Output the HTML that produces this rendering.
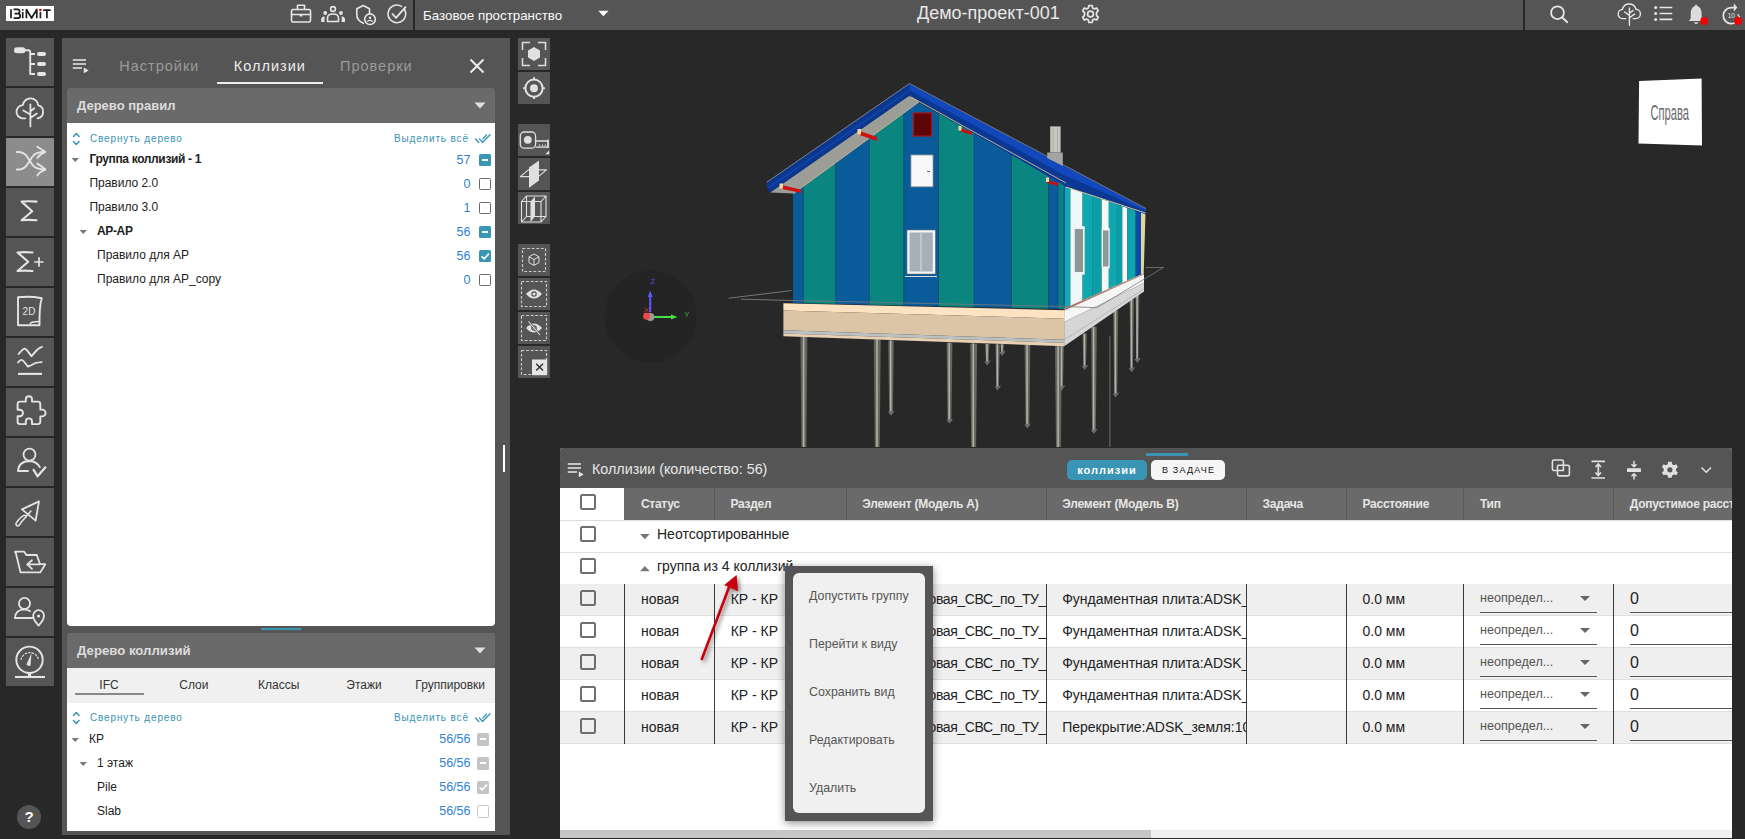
<!DOCTYPE html>
<html><head><meta charset="utf-8">
<style>
*{box-sizing:border-box;margin:0;padding:0}
html,body{width:1745px;height:839px;overflow:hidden;background:#282828;font-family:"Liberation Sans",sans-serif;}
.a{position:absolute}
#top{left:0;top:0;width:1745px;height:30px;background:#555}
.lb{position:absolute;left:6px;width:48px;height:48px;background:#555}
.lb svg{position:absolute;left:0;top:0}
#panel{left:62px;top:38px;width:448px;height:797px;background:#555}
.tab{position:absolute;top:57px;font-size:15px;letter-spacing:1px;color:#9a9a9a}
.sech{position:absolute;left:67px;width:428px;height:35px;background:#6a6a6a;border-radius:3px 3px 0 0;color:#ddd;font-weight:bold;font-size:14px}
.white{position:absolute;background:#fff}
.rt{position:absolute;left:518px;width:32px;height:32px;background:#555}
.tr{position:absolute;font-size:12px;color:#222;white-space:nowrap;margin-top:1px}
.num{position:absolute;font-size:12.5px;color:#2f7fd6;text-align:right;white-space:nowrap;margin-top:1.5px}
.cb{position:absolute;width:13px;height:13px;border:1.5px solid #555;border-radius:2px;background:#fff}
.cbf{position:absolute;width:13px;height:13px;border-radius:2px;background:#3d95b5}
.link{position:absolute;font-size:10px;letter-spacing:0.85px;color:#3a92b2;white-space:nowrap;margin-top:0.8px}
</style></head><body>
<div id="top" class="a"></div>
<svg class="a" style="left:0;top:0" width="1745" height="30" fill="none" stroke="#e6e6e6" stroke-width="1.6" stroke-linecap="round" stroke-linejoin="round">
 <rect x="6" y="6" width="48" height="15" fill="#fff" stroke="none"/>
 <g stroke="#1e1e1e" stroke-width="1.7" stroke-linecap="butt">
  <path d="M11 9.2V18.3"/>
  <path d="M13.6 9.3H17.6Q19.6 9.3 19.6 11.5Q19.6 13.6 17.4 13.6H14.5M17.4 13.6Q20.2 13.6 20.2 15.9Q20.2 18.2 17.6 18.2H13.6"/>
  <path d="M22.7 12V18.3"/><rect x="21.9" y="9.1" width="1.6" height="1.6" fill="#1e1e1e" stroke="none"/>
  <path d="M26.4 18.3V9.5L31.6 18L36.8 9.5V18.3"/>
  <path d="M40.4 12V18.3"/><rect x="39.2" y="8.9" width="2.4" height="2.2" fill="#e00000" stroke="none"/>
  <path d="M43.2 10.2H50.6M46.9 10.2V18.3"/>
 </g>
 <!-- briefcase -->
 <rect x="291.5" y="9.5" width="19" height="12.5" rx="1.5"/>
 <path d="M297.5 9.5V5.3H304.5V9.5M291.5 14.5H310.5"/>
 <rect x="299.6" y="14" width="2.8" height="2.5" fill="#e6e6e6" stroke="none"/>
 <!-- people -->
 <circle cx="333" cy="9" r="2.4"/>
 <path d="M327.5 21.5V18Q327.5 14 333 14Q338.5 14 338.5 18V21.5Z"/>
 <circle cx="325.2" cy="13" r="1.9" fill="#e6e6e6" stroke="none"/>
 <circle cx="341" cy="13" r="1.9" fill="#e6e6e6" stroke="none"/>
 <path d="M321.2 22V19.5Q321.2 16.8 324.5 16.3V22Z M345 22V19.5Q345 16.8 341.7 16.3V22Z" fill="#e6e6e6" stroke="none"/>
 <!-- shield -->
 <path d="M369.5 13.6V8.7L363.3 5.5L356.8 8.7V14.5Q356.8 20.5 363.3 23.2"/>
 <circle cx="370" cy="19.2" r="5.3"/>
 <circle cx="370" cy="17.8" r="1.2" fill="#e6e6e6" stroke="none"/>
 <path d="M367.6 21.2Q370 19.6 372.4 21.2" stroke-width="1.3"/>
 <!-- check circle -->
 <path d="M404.5 9.5A8.8 8.8 0 1 1 401.5 6.4"/>
 <path d="M392.5 14L396 17.8L405.5 7.2" stroke-width="1.8"/>
 <line x1="414" y1="0" x2="414" y2="30" stroke="#282828" stroke-width="2"/>
 <path d="M598.3 10.8H608.6L603.4 16.2Z" fill="#fff" stroke="none"/>
 <!-- gear -->
 <g transform="translate(1090.5 14)">
  <path d="M-1.6 -8.5H1.6L2.1 -6.1L3.9 -5.1L6.2 -6L7.8 -3.2L6 -1.6V1.6L7.8 3.2L6.2 6L3.9 5.1L2.1 6.1L1.6 8.5H-1.6L-2.1 6.1L-3.9 5.1L-6.2 6L-7.8 3.2L-6 1.6V-1.6L-7.8 -3.2L-6.2 -6L-3.9 -5.1L-2.1 -6.1Z" stroke-width="1.7"/>
  <circle r="2.9" stroke-width="1.7"/>
 </g>
 <line x1="1524" y1="0" x2="1524" y2="30" stroke="#282828" stroke-width="2"/>
 <!-- search -->
 <circle cx="1557.5" cy="12.7" r="6.4" stroke-width="1.8"/>
 <path d="M1562.3 17.5L1567.3 22.2" stroke-width="1.9"/>
 <!-- cloud tree -->
 <g transform="translate(1609.5 -4.2) scale(0.83)" stroke-width="1.7">
  <path d="M19.5 27.5H16.5A5.6 5.6 0 0 1 15.6 16.3A8.3 8.3 0 0 1 31.8 16.3A5.6 5.6 0 0 1 31.5 27.5H28.5"/>
  <path d="M24 14.5V35.5M18.2 19.5L24 23.5M28.3 17.8L24 20.8M30.2 22L24 26.5"/>
 </g>
 <!-- list -->
 <g fill="#e6e6e6" stroke="none">
  <circle cx="1655.6" cy="7.5" r="1.5"/><circle cx="1655.6" cy="13.5" r="1.5"/><circle cx="1655.6" cy="19.4" r="1.5"/>
 </g>
 <path d="M1659.5 7.5H1672.3M1659.5 13.5H1672.3M1659.5 19.4H1672.3" stroke-width="1.7" stroke-linecap="butt"/>
 <!-- bell -->
 <path d="M1696 4.5Q1697.3 4.5 1697.3 6Q1701.6 7.5 1701.6 13.5V18.5L1703.5 21H1688.8L1690.7 18.5V13.5Q1690.7 7.5 1695 6Q1695 4.5 1696 4.5Z" fill="#dcdcdc" stroke="none"/>
 <path d="M1694 22.2H1698.3Q1698 24 1696.2 24Q1694.3 24 1694 22.2Z" fill="#dcdcdc" stroke="none"/>
 <circle cx="1704.2" cy="20.9" r="3.9" fill="#f00000" stroke="none"/>
 <!-- refresh 10 -->
 <path d="M1739.2 16.8A8 8 0 1 1 1731.2 7.6H1734.5" stroke-width="1.8"/>
 <path d="M1733.8 3.3L1737.3 7.6L1733.8 11.8Z" fill="#e6e6e6" stroke="none"/>
 <text x="1731.3" y="18.3" font-family="Liberation Sans" font-size="6.5" fill="#e6e6e6" stroke="none" text-anchor="middle">10</text>
 <rect x="1737.5" y="14.2" width="1.6" height="1.6" fill="#e6e6e6" stroke="none"/>
 <circle cx="1738" cy="20.9" r="3.9" fill="#f00000" stroke="none"/>
</svg>
<div class="a" style="left:423px;top:8.2px;font-size:13.35px;color:#fafafa;white-space:nowrap">Базовое пространство</div>
<div class="a" style="left:917px;top:3px;font-size:18px;color:#e8e8e8;white-space:nowrap">Демо-проект-001</div>
<!-- left toolbar -->
<div class="lb" style="top:38px;background:#555"><svg width="48" height="48" fill="none" stroke="#e4e4e4" stroke-linecap="round" stroke-linejoin="round"><rect x="8" y="9.2" width="11.5" height="6" rx="3" fill="#e4e4e4" stroke="none"/>
<path d="M19 12.2H22.5Q24.2 12.2 24.2 14V36H29M24.2 16H29M24.2 26H29" stroke-width="1.9" stroke-linecap="butt"/>
<rect x="31" y="14" width="9" height="4" rx="2" fill="#e4e4e4" stroke="none"/>
<rect x="31" y="24" width="9" height="4" rx="2" fill="#e4e4e4" stroke="none"/>
<rect x="31" y="34" width="9" height="4" rx="2" fill="#e4e4e4" stroke="none"/></svg></div>
<div class="lb" style="top:88px;background:#555"><svg width="48" height="48" fill="none" stroke="#e4e4e4" stroke-linecap="round" stroke-linejoin="round"><path d="M19.3 30.3H16A6.6 6.6 0 0 1 16.8 17.2A7.8 7.8 0 0 1 32.3 17.4A6.6 6.6 0 0 1 31.5 30.3" stroke-width="1.8"/>
<path d="M24.4 16.5V38.5M17.3 22.5L24.4 26.5M28.3 20.3L24.4 23.3M30.8 25.6L24.4 30" stroke-width="1.8"/></svg></div>
<div class="lb" style="top:138px;background:#8c8c8c"><svg width="48" height="48" fill="none" stroke="#e4e4e4" stroke-linecap="round" stroke-linejoin="round"><path d="M10.8 14Q17.5 13.5 21 18.5L26.5 27Q30 31.5 39 31.5M10.8 31.5Q17.5 32 21 27L26.5 18.5Q30 13.8 39 14" stroke-width="1.9"/>
<path d="M31.3 8.7Q36 11.5 39.3 14Q35 15.3 31.3 20M31.3 25.6Q36 28.4 39.3 31.5Q35 32.8 31.3 37.5" stroke-width="1.9"/></svg></div>
<div class="lb" style="top:188px;background:#555"><svg width="48" height="48" fill="none" stroke="#e4e4e4" stroke-linecap="round" stroke-linejoin="round"><path d="M30.5 13.6Q22.5 12.8 15.6 13.6L26.2 23.2L15.6 32.3Q22.5 31.5 30.5 32.3" stroke-width="2.1"/></svg></div>
<div class="lb" style="top:238px;background:#555"><svg width="48" height="48" fill="none" stroke="#e4e4e4" stroke-linecap="round" stroke-linejoin="round"><path d="M26.5 14.5Q19 13.7 11.5 14.5L22.2 23.8L11.5 33Q19 32.2 26.5 33" stroke-width="2.1"/>
<path d="M28.3 24H37.6M33 19.3V28.7" stroke-width="1.7" stroke-linecap="butt"/></svg></div>
<div class="lb" style="top:288px;background:#555"><svg width="48" height="48" fill="none" stroke="#e4e4e4" stroke-linecap="round" stroke-linejoin="round"><path d="M12 9.3Q24 7.8 35.8 10.2Q33.2 18 33.5 37.2H12Z" stroke-width="1.9"/>
<path d="M24.3 35.5Q25.5 33.5 33 33.5" stroke-width="1.5"/>
<text x="23" y="27" font-family="Liberation Sans" font-size="10" fill="#e4e4e4" stroke="none" text-anchor="middle">2D</text></svg></div>
<div class="lb" style="top:338px;background:#555"><svg width="48" height="48" fill="none" stroke="#e4e4e4" stroke-linecap="round" stroke-linejoin="round"><path d="M12.6 16Q16.5 11 18.7 10.6Q19.5 10.5 21 12.3L25.5 18.2L30.5 12.5Q33 10 36 8.9" stroke-width="1.9"/>
<path d="M12.1 24.5Q14 21.8 15.7 21.9Q17 22 21.7 28.5Q25 27.5 29 25.2Q32 24.3 35.6 24.1" stroke-width="1.9"/>
<path d="M12 35.9H36" stroke-width="2.1" stroke-linecap="butt"/></svg></div>
<div class="lb" style="top:388px;background:#555"><svg width="48" height="48" fill="none" stroke="#e4e4e4" stroke-linecap="round" stroke-linejoin="round"><path d="M14 13.6H19.8V11.4A2 2 0 0 1 26 11.4V13.6H31.8Q34.3 13.6 34.3 16V21.6H36.2A2 2 0 0 1 36.2 28.4H34.3V33.8Q34.3 36.1 31.8 36.1H26V33.5A2 2 0 0 0 19.8 33.5V36.1H14Q11.6 36.1 11.6 33.8V28.2H13.8A2 2 0 0 0 13.8 21.8H11.6V16Q11.6 13.6 14 13.6Z" stroke-width="1.9"/></svg></div>
<div class="lb" style="top:438px;background:#555"><svg width="48" height="48" fill="none" stroke="#e4e4e4" stroke-linecap="round" stroke-linejoin="round"><circle cx="23.5" cy="16.6" r="6" stroke-width="1.8"/>
<path d="M34.3 29.9Q31 23.2 23.5 23Q12.5 23.4 12 33H22.7" stroke-width="1.8" stroke-linecap="butt"/>
<path d="M27.6 31.8L31.6 38.3L39.4 29.3" stroke-width="2.2"/></svg></div>
<div class="lb" style="top:488px;background:#555"><svg width="48" height="48" fill="none" stroke="#e4e4e4" stroke-linecap="round" stroke-linejoin="round"><path d="M16 21.4L33 13.4L29.6 32.6Z" stroke-width="1.8"/>
<path d="M24.9 23L21.8 26.7Q20 28.5 19 27.3Q16 27.3 10.5 34.5Q9 37.5 11.5 38Q13.5 38 15.5 33.7L20.6 28.3" stroke-width="1.6"/></svg></div>
<div class="lb" style="top:538px;background:#555"><svg width="48" height="48" fill="none" stroke="#e4e4e4" stroke-linecap="round" stroke-linejoin="round"><path d="M9.7 14.5Q8.5 14 9.3 13.6H18.2L20.3 17H30.8L34 26.2H39.3L34.3 34.4H14.5Z" stroke-width="1.8"/>
<path d="M33.5 26.4H21.2M26 22.3L21.2 26.4L26 30.8" stroke-width="1.8"/></svg></div>
<div class="lb" style="top:588px;background:#555"><svg width="48" height="48" fill="none" stroke="#e4e4e4" stroke-linecap="round" stroke-linejoin="round"><circle cx="18.5" cy="15.5" r="5.6" stroke-width="1.8"/>
<path d="M24.7 23.6Q22 21.3 18.5 21.3Q9.5 21.5 8.9 30H27" stroke-width="1.8" stroke-linecap="butt"/>
<path d="M32.6 37.6Q27.2 32 27.2 27.6A5.4 5.4 0 0 1 38 27.6Q38 32 32.6 37.6Z" stroke-width="1.8"/>
<circle cx="32.6" cy="28" r="1.6" fill="#e4e4e4" stroke="none"/></svg></div>
<div class="lb" style="top:638px;background:#555"><svg width="48" height="48" fill="none" stroke="#e4e4e4" stroke-linecap="round" stroke-linejoin="round"><circle cx="23.5" cy="21.8" r="13.2" stroke-width="1.9"/>
<path d="M21.9 35H25.1V38.5H21.9Z" fill="#e4e4e4" stroke="none"/>
<path d="M9 39H39" stroke-width="2.1" stroke-linecap="butt"/>
<path d="M25.5 15.2L20.4 26.5Q22.7 28.8 24.5 27.5Z" fill="#e4e4e4" stroke="none"/>
<path d="M15 21.5A9 9 0 0 1 32.5 21.5" stroke-width="1.1" stroke-dasharray="1.6 1.9"/></svg></div>
<div class="a" style="left:17px;top:805px;width:24px;height:24px;border-radius:50%;background:#555;color:#fff;font-weight:bold;font-size:15px;text-align:center;line-height:24px">?</div>

<div id="panel" class="a"></div>
<svg class="a" style="left:72px;top:58px" width="18" height="16"><path d="M0.8 2H14M0.8 6H14M0.8 10H10" stroke="#e8e8e8" stroke-width="1.6"/><path d="M11.8 9.5L16.6 12.4L11.8 15.3Z" fill="#e8e8e8"/></svg>
<div class="tab" style="left:119.3px;top:58px;font-size:14.5px">Настройки</div>
<div class="tab" style="left:233.8px;top:58px;font-size:14.5px;color:#ececec">Коллизии</div>
<div class="tab" style="left:340px;top:58px;font-size:14.5px">Проверки</div>
<div class="a" style="left:217px;top:82px;width:106px;height:2.2px;background:#ececec"></div>
<svg class="a" style="left:469px;top:58px" width="16" height="16"><path d="M1.5 1.5L14.5 14.5M14.5 1.5L1.5 14.5" stroke="#ececec" stroke-width="2"/></svg>
<div class="a" style="left:503.2px;top:444.5px;width:1.6px;height:27.5px;background:#fff"></div>
<div class="sech" style="top:88px"><span class="a" style="left:10px;top:9.5px;font-size:13px">Дерево правил</span><svg class="a" style="left:407px;top:14px" width="12" height="7"><path d="M0.5 0.5H11.5L6 6.5Z" fill="#e0e0e0"/></svg></div>
<div class="white" style="left:67px;top:123px;width:428px;height:503px;border-radius:0 0 4px 4px"></div>
<svg class="a" style="left:72px;top:131.5px" width="9" height="14" fill="none" stroke="#3a95b5" stroke-width="1.5" stroke-linecap="round" stroke-linejoin="round"><path d="M1.5 4.5L4.3 1.5L7.1 4.5M1.5 9.5L4.3 12.5L7.1 9.5"/></svg>
<div class="link" style="left:90px;top:132.5px">Свернуть дерево</div>
<div class="link" style="left:394px;top:132.5px">Выделить всё</div>
<svg class="a" style="left:474px;top:132.5px" width="18" height="11" fill="none" stroke="#3a95b5" stroke-width="1.4" stroke-linecap="round" stroke-linejoin="round"><path d="M1.5 6L4.8 9.4M5.5 6L8.5 9.4L16 1.8M8.9 5.9L12.4 2"/></svg>
<svg class="a" style="left:71px;top:157.0px" width="9" height="6"><path d="M0.5 1H8L4.25 5Z" fill="#777"/></svg>
<div class="tr" style="left:89.4px;top:151px;font-weight:bold;letter-spacing:-0.35px;">Группа коллизий - 1</div>
<div class="num" style="right:1274.5px;top:151px">57</div>
<div class="a" style="left:478.5px;top:153.5px;width:12.5px;height:12.5px;border-radius:1.5px;background:#3a95b5"><div class="a" style="left:3px;top:5.3px;width:6.5px;height:1.9px;background:#fff"></div></div>
<div class="tr" style="left:89.4px;top:175px;">Правило 2.0</div>
<div class="num" style="right:1274.5px;top:175px">0</div>
<div class="a" style="left:478.5px;top:177.5px;width:12.5px;height:12.5px;border:1.6px solid #6a6a6a;border-radius:1.5px;background:#fff"></div>
<div class="tr" style="left:89.4px;top:199px;">Правило 3.0</div>
<div class="num" style="right:1274.5px;top:199px">1</div>
<div class="a" style="left:478.5px;top:201.5px;width:12.5px;height:12.5px;border:1.6px solid #6a6a6a;border-radius:1.5px;background:#fff"></div>
<svg class="a" style="left:79px;top:229.0px" width="9" height="6"><path d="M0.5 1H8L4.25 5Z" fill="#777"/></svg>
<div class="tr" style="left:97px;top:223px;font-weight:bold;letter-spacing:-0.35px;">АР-АР</div>
<div class="num" style="right:1274.5px;top:223px">56</div>
<div class="a" style="left:478.5px;top:225.5px;width:12.5px;height:12.5px;border-radius:1.5px;background:#3a95b5"><div class="a" style="left:3px;top:5.3px;width:6.5px;height:1.9px;background:#fff"></div></div>
<div class="tr" style="left:97px;top:247px;">Правило для АР</div>
<div class="num" style="right:1274.5px;top:247px">56</div>
<div class="a" style="left:478.5px;top:249.5px;width:12.5px;height:12.5px;border-radius:1.5px;background:#3a95b5"><svg class="a" style="left:0;top:0" width="12.5" height="12.5"><path d="M2.6 6.4L5.1 8.9L10 3.6" fill="none" stroke="#fff" stroke-width="1.6"/></svg></div>
<div class="tr" style="left:97px;top:271px;">Правило для АР_copy</div>
<div class="num" style="right:1274.5px;top:271px">0</div>
<div class="a" style="left:478.5px;top:273.5px;width:12.5px;height:12.5px;border:1.6px solid #6a6a6a;border-radius:1.5px;background:#fff"></div>
<div class="a" style="left:261px;top:627.5px;width:40px;height:2px;background:#3a95b5"></div>
<div class="sech" style="top:633px"><span class="a" style="left:10px;top:9.5px;font-size:13.2px">Дерево коллизий</span><svg class="a" style="left:407px;top:14px" width="12" height="7"><path d="M0.5 0.5H11.5L6 6.5Z" fill="#e0e0e0"/></svg></div>
<div class="white" style="left:67px;top:668px;width:428px;height:163px"></div>
<div class="a" style="left:67px;top:668px;width:428px;height:34.5px;background:#f0f0f0"></div>
<div class="a" style="left:59px;width:100px;text-align:center;top:678px;font-size:12px;color:#333;white-space:nowrap">IFC</div>
<div class="a" style="left:143.9px;width:100px;text-align:center;top:678px;font-size:12px;color:#333;white-space:nowrap">Слои</div>
<div class="a" style="left:228.7px;width:100px;text-align:center;top:678px;font-size:12px;color:#333;white-space:nowrap">Классы</div>
<div class="a" style="left:314px;width:100px;text-align:center;top:678px;font-size:12px;color:#333;white-space:nowrap">Этажи</div>
<div class="a" style="left:400.2px;width:100px;text-align:center;top:678px;font-size:12px;color:#333;white-space:nowrap">Группировки</div>
<div class="a" style="left:75px;top:692.5px;width:69px;height:2px;background:#888"></div>
<svg class="a" style="left:72px;top:710.6px" width="9" height="14" fill="none" stroke="#3a95b5" stroke-width="1.5" stroke-linecap="round" stroke-linejoin="round"><path d="M1.5 4.5L4.3 1.5L7.1 4.5M1.5 9.5L4.3 12.5L7.1 9.5"/></svg>
<div class="link" style="left:90px;top:711.6px">Свернуть дерево</div>
<div class="link" style="left:394px;top:711.6px">Выделить всё</div>
<svg class="a" style="left:474px;top:711.6px" width="18" height="11" fill="none" stroke="#3a95b5" stroke-width="1.4" stroke-linecap="round" stroke-linejoin="round"><path d="M1.5 6L4.8 9.4M5.5 6L8.5 9.4L16 1.8M8.9 5.9L12.4 2"/></svg>
<svg class="a" style="left:71px;top:736.7px" width="9" height="6"><path d="M0.5 1H8L4.25 5Z" fill="#777"/></svg>
<div class="tr" style="left:89px;top:730.7px">КР</div>
<div class="num" style="right:1274.5px;top:730.7px">56/56</div>
<div class="a" style="left:476.7px;top:733.2px;width:12.5px;height:12.5px;border-radius:1.5px;background:#c4c4c4"><div class="a" style="left:3px;top:5.3px;width:6.5px;height:1.9px;background:#fff"></div></div>
<svg class="a" style="left:79px;top:760.6px" width="9" height="6"><path d="M0.5 1H8L4.25 5Z" fill="#777"/></svg>
<div class="tr" style="left:97px;top:754.6px">1 этаж</div>
<div class="num" style="right:1274.5px;top:754.6px">56/56</div>
<div class="a" style="left:476.7px;top:757.1px;width:12.5px;height:12.5px;border-radius:1.5px;background:#c4c4c4"><div class="a" style="left:3px;top:5.3px;width:6.5px;height:1.9px;background:#fff"></div></div>
<div class="tr" style="left:97px;top:778.6px">Pile</div>
<div class="num" style="right:1274.5px;top:778.6px">56/56</div>
<div class="a" style="left:476.7px;top:781.1px;width:12.5px;height:12.5px;border-radius:1.5px;background:#c4c4c4"><svg class="a" style="left:0;top:0" width="12.5" height="12.5"><path d="M2.6 6.4L5.1 8.9L10 3.6" fill="none" stroke="#fff" stroke-width="1.6"/></svg></div>
<div class="tr" style="left:97px;top:802.6px">Slab</div>
<div class="num" style="right:1274.5px;top:802.6px">56/56</div>
<div class="a" style="left:476.7px;top:805.1px;width:12.5px;height:12.5px;border:1.6px solid #c8c8c8;border-radius:1.5px;background:#fff"></div>

<!-- right toolbar -->
<div class="rt" style="top:38px"><svg width="32" height="32" fill="none" stroke="#e0e0e0" stroke-linejoin="round"><path d="M4.5 12V4.5H12M20 4.5H27.5V12M27.5 20V27.5H20M12 27.5H4.5V20" stroke-width="1.5" stroke-linecap="butt"/>
<path d="M16 9.1L22 12.6V19.5L16 23L10 19.5V12.6Z" fill="#e0e0e0" stroke="none"/></svg></div>
<div class="rt" style="top:72px"><svg width="32" height="32" fill="none" stroke="#e0e0e0" stroke-linejoin="round"><circle cx="16" cy="16.2" r="8.6" stroke-width="2"/><circle cx="16" cy="16.2" r="4" fill="#e0e0e0" stroke="none"/>
<path d="M16 5.3V7.5M16 24.9V27.1M5.1 16.2H7.3M24.7 16.2H26.9" stroke-width="2" stroke-linecap="butt"/></svg></div>
<div class="rt" style="top:124px"><svg width="32" height="32" fill="none" stroke="#e0e0e0" stroke-linejoin="round"><rect x="2.3" y="8" width="15.3" height="16.2" rx="4" stroke-width="1.3"/>
<circle cx="9.8" cy="15.8" r="3.9" fill="#e0e0e0" stroke="none"/>
<path d="M17.6 17H30V23.2H17.6" stroke-width="1.3"/><path d="M30 15.5V24" stroke-width="1.3"/>
<path d="M21.5 20.5V22.5M24.5 20.5V22.5M27.3 20.5V22.5" stroke-width="1.1"/>
<path d="M27.3 30.3L31.2 26.6V30.3Z" fill="#e0e0e0" stroke="none"/></svg></div>
<div class="rt" style="top:158px"><svg width="32" height="32" fill="none" stroke="#e0e0e0" stroke-linejoin="round"><path d="M2.4 18.6L10.4 11.9H28.4L20.3 18.6Z" stroke-width="1.1"/>
<path d="M21 2.5V22.5L11 29.8V9.5Z" fill="#e0e0e0" stroke="none"/></svg></div>
<div class="rt" style="top:192px"><svg width="32" height="32" fill="none" stroke="#e0e0e0" stroke-linejoin="round"><path d="M3.5 9.5L8.5 4H28L23 9.5ZM3.5 9.5V30M23 9.5V30H3.5M28 4V24.5L23 30M8.5 4V24.5H28M8.5 24.5L3.5 30" stroke-width="1.1"/>
<path d="M12.5 9.5L17 4.5V24.5L12.5 30Z" fill="#e0e0e0" stroke="none"/></svg></div>
<div class="rt" style="top:244px"><svg width="32" height="32" fill="none" stroke="#e0e0e0" stroke-linejoin="round"><rect x="4.5" y="4.5" width="23" height="23" stroke-width="1.1" stroke="#cdcdcd" stroke-dasharray="2.8 1.8"/>
<path d="M16 10L21 12.8V18.6L16 21.4L11 18.6V12.8ZM11 12.8L16 15.6L21 12.8M16 15.6V21.4" stroke-width="1"/></svg></div>
<div class="rt" style="top:278px"><svg width="32" height="32" fill="none" stroke="#e0e0e0" stroke-linejoin="round"><rect x="3.5" y="3.5" width="25" height="25" stroke-width="1.1" stroke="#cdcdcd" stroke-dasharray="2.8 1.8"/>
<path d="M8 16Q16 7 24 16Q16 25 8 16Z" fill="#e0e0e0" stroke="none"/>
<circle cx="16" cy="16" r="2.8" fill="#555" stroke="none"/><circle cx="16" cy="16" r="1.6" fill="#e0e0e0" stroke="none"/></svg></div>
<div class="rt" style="top:312px"><svg width="32" height="32" fill="none" stroke="#e0e0e0" stroke-linejoin="round"><rect x="3.5" y="3.5" width="25" height="25" stroke-width="1.1" stroke="#cdcdcd" stroke-dasharray="2.8 1.8"/>
<path d="M8 16Q16 7 24 16Q16 25 8 16Z" fill="#e0e0e0" stroke="none"/>
<circle cx="16" cy="16" r="2.8" fill="#555" stroke="none"/><circle cx="16" cy="16" r="1.6" fill="#e0e0e0" stroke="none"/>
<path d="M10.5 9.5L22 23" stroke="#555" stroke-width="2.2"/><path d="M10.5 9.5L22 23" stroke-width="1.1"/></svg></div>
<div class="rt" style="top:346px"><svg width="32" height="32" fill="none" stroke="#e0e0e0" stroke-linejoin="round"><rect x="3.5" y="4.5" width="25" height="24" stroke-width="1.1" stroke="#cdcdcd" stroke-dasharray="2.8 1.8"/>
<rect x="14" y="13.5" width="15.2" height="15.7" fill="#e6e6e6" stroke="none"/>
<path d="M18.2 17.7L25 24.5M25 17.7L18.2 24.5" stroke="#333" stroke-width="1.5"/></svg></div>

<!-- 3D viewport -->
<svg class="a" style="left:0;top:0" width="1745" height="447">
<defs>
 <clipPath id="cg"><polygon points="793,192.7 909.5,97.5 1065.5,183 1064,309 793,303"/></clipPath>
 <clipPath id="cs"><polygon points="1063.5,186 1145.5,212.9 1143.7,273.7 1063.5,309"/></clipPath>
</defs>
<!-- axis gizmo -->
<circle cx="650.3" cy="316.4" r="46" fill="#242424"/>
<path d="M650.2 312V295" stroke="#5a5aff" stroke-width="2"/><path d="M650.2 290.5L647.8 297H652.6Z" fill="#5a5aff"/>
<text x="652.8" y="284" font-family="Liberation Sans" font-size="8" fill="#4a4ae0" text-anchor="middle">Z</text>
<path d="M654 317H673" stroke="#44e044" stroke-width="2"/><path d="M677.5 317L671 314.6V319.4Z" fill="#44e044"/>
<text x="687" y="317" font-family="Liberation Sans" font-size="8" fill="#30b030" text-anchor="middle">Y</text>
<circle cx="650.3" cy="317" r="4" fill="#9a9a9a"/><circle cx="646.5" cy="316.2" r="3.4" fill="#f04848"/>
<path d="M644.5 307.5L649 312.5M649 307.5L644.5 312.5" stroke="#e03030" stroke-width="0.8"/>
<!-- view cube -->
<polygon points="1639.1,80.9 1701.6,78.5 1702,145.6 1638.5,143.4" fill="#fff"/>
<text transform="translate(1669.7 120.2) scale(0.52 1)" font-family="Liberation Sans" font-size="21.5" fill="#6a6a6a" text-anchor="middle">Справа</text>
<!-- ground lines -->
<path d="M728.6 298.2L791.5 290.6M741 299.2L793 300.5" stroke="#8a8a8a" stroke-width="0.8" fill="none"/>
<!-- piles -->
<path d="M800.4 337.0L807.3 337.0L806.3 447.0L801.4 447.0Z" fill="#66665f"/><path d="M803.6 337V447" stroke="#b4b4ac" stroke-width="1.5"/><path d="M873.8 339.3L880.7 339.3L879.7 447.0L874.8 447.0Z" fill="#66665f"/><path d="M877.0 339.3V447" stroke="#b4b4ac" stroke-width="1.5"/><path d="M888.2 340.4L893.8 340.4L892.8 413.8L889.2 413.8Z" fill="#66665f"/><path d="M890.7 340.4V413.8" stroke="#b4b4ac" stroke-width="1.5"/><path d="M888.0 411.8L894.5 410.8L891.0 415.8Z" fill="#6a6a72"/><path d="M946.6 342.7L952.4 342.7L951.4 421.8L947.6 421.8Z" fill="#66665f"/><path d="M949.2 342.7V421.8" stroke="#b4b4ac" stroke-width="1.5"/><path d="M946.5 419.8L953.0 418.8L949.5 423.8Z" fill="#6a6a72"/><path d="M970.2 343.4L977.1 343.4L976.1 447.0L971.2 447.0Z" fill="#66665f"/><path d="M973.3 343.4V447" stroke="#b4b4ac" stroke-width="1.5"/><path d="M985.1 343.9L989.4 343.9L988.4 363.4L986.1 363.4Z" fill="#66665f"/><path d="M987.0 343.9V363.4" stroke="#b4b4ac" stroke-width="1.5"/><path d="M984.3 361.4L990.8 360.4L987.3 365.4Z" fill="#6a6a72"/><path d="M995.5 344.3L999.8 344.3L998.8 388.6L996.5 388.6Z" fill="#66665f"/><path d="M997.3 344.3V388.6" stroke="#b4b4ac" stroke-width="1.5"/><path d="M994.6 386.6L1001.1 385.6L997.6 390.6Z" fill="#6a6a72"/><path d="M1000.3 344.3L1004.1 344.3L1003.1 354.0L1001.3 354.0Z" fill="#66665f"/><path d="M1001.9 344.3V354" stroke="#b4b4ac" stroke-width="1.5"/><path d="M999.2 352L1005.7 351L1002.2 356Z" fill="#6a6a72"/><path d="M1024.6 345.0L1030.3 345.0L1029.3 426.4L1025.6 426.4Z" fill="#66665f"/><path d="M1027.1 345V426.4" stroke="#b4b4ac" stroke-width="1.5"/><path d="M1024.4 424.4L1030.9 423.4L1027.4 428.4Z" fill="#6a6a72"/><path d="M1055.0 346.2L1061.9 346.2L1060.9 447.0L1056.0 447.0Z" fill="#66665f"/><path d="M1058.1 346.2V447" stroke="#b4b4ac" stroke-width="1.5"/><path d="M1059.6 346.2L1063.9 346.2L1062.9 388.6L1060.6 388.6Z" fill="#66665f"/><path d="M1061.5 346.2V388.6" stroke="#b4b4ac" stroke-width="1.5"/><path d="M1058.8 386.6L1065.3 385.6L1061.8 390.6Z" fill="#6a6a72"/><path d="M1082.6 333.6L1086.9 333.6L1085.9 368.0L1083.6 368.0Z" fill="#66665f"/><path d="M1084.4 333.6V368" stroke="#b4b4ac" stroke-width="1.5"/><path d="M1081.7 366L1088.2 365L1084.7 370Z" fill="#6a6a72"/><path d="M1091.1 326.7L1096.8 326.7L1095.8 432.0L1092.1 432.0Z" fill="#66665f"/><path d="M1093.6 326.7V432" stroke="#b4b4ac" stroke-width="1.5"/><path d="M1090.9 430L1097.4 429L1093.9 434Z" fill="#6a6a72"/><path d="M1113.2 310.6L1118.2 310.6L1117.2 395.4L1114.2 395.4Z" fill="#66665f"/><path d="M1115.4 310.6V395.4" stroke="#b4b4ac" stroke-width="1.5"/><path d="M1112.7 393.4L1119.2 392.4L1115.7 397.4Z" fill="#6a6a72"/><path d="M1129.6 299.2L1133.9 299.2L1132.9 370.2L1130.6 370.2Z" fill="#66665f"/><path d="M1131.4 299.2V370.2" stroke="#b4b4ac" stroke-width="1.5"/><path d="M1128.7 368.2L1135.2 367.2L1131.7 372.2Z" fill="#6a6a72"/><path d="M1135.5 294.6L1139.3 294.6L1138.3 361.0L1136.5 361.0Z" fill="#66665f"/><path d="M1137.1 294.6V361" stroke="#b4b4ac" stroke-width="1.5"/><path d="M1134.4 359L1140.9 358L1137.4 363Z" fill="#6a6a72"/><path d="M1109.9 335.8V447" stroke="#707070" stroke-width="1"/>
<!-- foundation front -->
<polygon points="783.4,303.3 1064.2,310.2 1064.2,318.7 783.4,310.6" fill="#fde3c2"/>
<polygon points="783.4,310.6 1064.2,318.7 1064.2,339.8 783.4,330.2" fill="#dcc4a6"/>
<polygon points="783.4,330.2 1064.2,339.8 1064.2,342.8 783.4,333.4" fill="#bcc0c0"/>
<polygon points="783.4,333.4 1064.2,342.8 1064.2,346.2 783.4,336.2" fill="#e8d0b2"/>
<!-- foundation side -->
<polygon points="1064.2,310.2 1144,274 1144,283 1064.2,322" fill="#f6f6f6"/>
<polygon points="1064.2,322 1144,283 1144,291.6 1064.2,346.2" fill="#d6d6d6"/>
<path d="M1064.2 310.2L1144 274" stroke="#c89080" stroke-width="1"/>
<path d="M1064.2 340L1144 289" stroke="#b0b0b0" stroke-width="0.8"/>
<!-- gable wall -->
<g clip-path="url(#cg)"><rect x="780" y="80" width="23.299999999999955" height="240" fill="#0a5b99"/><rect x="803.3" y="80" width="32.5" height="240" fill="#0b8580"/><rect x="835.8" y="80" width="33.5" height="240" fill="#0a5b99"/><rect x="869.3" y="80" width="34.5" height="240" fill="#0b8580"/><rect x="903.8" y="80" width="34.700000000000045" height="240" fill="#0a5b99"/><rect x="938.5" y="80" width="35.5" height="240" fill="#0b8580"/><rect x="974" y="80" width="37.39999999999998" height="240" fill="#0a5b99"/><rect x="1011.4" y="80" width="37.10000000000002" height="240" fill="#0b8580"/><rect x="1048.5" y="80" width="9.5" height="240" fill="#0a5b99"/><rect x="1058" y="80" width="12" height="240" fill="#0a7f86"/><path d="M803.3 80V320" stroke="#06486e" stroke-width="0.6"/><path d="M835.8 80V320" stroke="#06486e" stroke-width="0.6"/><path d="M869.3 80V320" stroke="#06486e" stroke-width="0.6"/><path d="M903.8 80V320" stroke="#06486e" stroke-width="0.6"/><path d="M938.5 80V320" stroke="#06486e" stroke-width="0.6"/><path d="M974 80V320" stroke="#06486e" stroke-width="0.6"/><path d="M1011.4 80V320" stroke="#06486e" stroke-width="0.6"/><path d="M1048.5 80V320" stroke="#06486e" stroke-width="0.6"/><path d="M1058 80V320" stroke="#06486e" stroke-width="0.6"/></g>
<!-- side wall -->
<g clip-path="url(#cs)"><rect x="1060" y="170" width="5" height="150" fill="#0a5aa0"/><rect x="1065" y="170" width="5.400000000000091" height="150" fill="#10a9b1"/><rect x="1070.4" y="170" width="12.199999999999818" height="150" fill="#eef8f8"/><rect x="1082.6" y="170" width="10.200000000000045" height="150" fill="#0fa8b0"/><rect x="1092.8" y="170" width="8.900000000000091" height="150" fill="#0c9ea6"/><rect x="1101.7" y="170" width="7.099999999999909" height="150" fill="#f4f8f8"/><rect x="1108.8" y="170" width="8.100000000000136" height="150" fill="#0fa8b0"/><rect x="1116.9" y="170" width="5.399999999999864" height="150" fill="#0c9ea6"/><rect x="1122.3" y="170" width="5.0" height="150" fill="#f4f8f8"/><rect x="1127.3" y="170" width="8.400000000000091" height="150" fill="#0fa5ad"/><rect x="1135.7" y="170" width="5.2999999999999545" height="150" fill="#0a4aa8"/><rect x="1141" y="170" width="9" height="150" fill="#e4d59a"/></g>
<rect x="1073" y="226.3" width="11.7" height="48.3" fill="#f0f4f4"/><rect x="1074.8" y="229" width="8.2" height="43" fill="#8e9696"/>
<rect x="1101.7" y="228" width="8" height="40.4" fill="#f0f4f4"/><rect x="1103" y="230.5" width="5.5" height="36" fill="#8e9696"/>
<path d="M1063.5 309L1143.7 273.7" stroke="#c8a090" stroke-width="1"/>
<path d="M793 300.5L1064 306.5L1097 307.7L1163.4 267.5H1145.5" stroke="#7a7a7a" stroke-width="0.8" fill="none"/>
<!-- gable details -->
<rect x="913.5" y="113" width="18" height="23" fill="#5e0508" stroke="#b01010" stroke-width="1.2"/>
<rect x="911" y="155" width="22" height="31.8" fill="#f8f8f8" stroke="#9a9a9a" stroke-width="0.8"/>
<path d="M927 171.5H930" stroke="#666" stroke-width="1"/>
<rect x="907" y="230" width="28.3" height="44" fill="#f6f6f6" stroke="#777" stroke-width="0.6"/>
<rect x="909.5" y="232.5" width="23.3" height="39" fill="#a7b0b6"/>
<path d="M921 232.5V271.5" stroke="#d0d6da" stroke-width="1.2"/>
<path d="M905 276.5H937" stroke="#ddd" stroke-width="1"/>
<!-- soffit -->
<polygon points="770,192.5 909.5,95.5 919.5,101.5 793.5,193.5" fill="#9d9d98"/>
<path d="M793.5 193.5L919.5 101.5" stroke="#d8c090" stroke-width="0.8"/>
<!-- roof left -->
<polygon points="766.7,182.3 909.5,83.5 909.5,95.5 770,192.5 767,188" fill="#0a3790"/>
<path d="M766.7 182.3L909.5 83.5" stroke="#8a8a8a" stroke-width="0.9"/>
<path d="M769 187.5L909.5 90.5" stroke="#1548b0" stroke-width="1.2"/>
<!-- roof right -->
<polygon points="909.5,83.5 1146,208.5 1146,214.5 1066,186.5 909.5,96" fill="#0a3892"/>
<polygon points="909.5,83.5 1146,208.5 1146,211 1066,176 909.5,90" fill="#1248bb"/>
<path d="M909.5 83.5L1146 208.5" stroke="#7a7a7a" stroke-width="0.9"/>
<path d="M911 97L1066 183" stroke="#d8c090" stroke-width="0.9"/>
<path d="M1066 187L1145.5 213" stroke="#d8c890" stroke-width="1"/>
<!-- chimney -->
<rect x="1050.2" y="126.4" width="10.4" height="26.1" fill="#c6c6c2"/>
<path d="M1053 128V152M1057.5 128V152" stroke="#9a9a96" stroke-width="0.6"/>
<polygon points="1047.2,152.5 1062.8,152.5 1062.8,166 1047.2,158" fill="#a4a4a0"/>
<!-- red beams -->
<polygon points="781.5,185 800.5,189.5 801.5,193 782,189" fill="#d01010"/><rect x="779.5" y="183.5" width="3.5" height="5" fill="#f0d8a0"/>
<polygon points="859.5,131 877,137 877,141 859.5,135" fill="#d01010"/><rect x="857.5" y="129" width="3.5" height="5.5" fill="#f0d8a0"/>
<polygon points="960.5,128 972,132 972,135 960.5,131.5" fill="#c81010"/><rect x="958.5" y="126" width="3" height="4.5" fill="#f0d8a0"/>
<polygon points="1047,180 1058,183 1058,186 1047,183" fill="#c81010"/><rect x="1046" y="177.5" width="3" height="4.5" fill="#f0d8a0"/>
</svg>
<!-- collisions panel -->
<div class="a" style="left:560px;top:448px;width:1172px;height:390px;background:#fff;border-radius:3px 3px 0 0;overflow:hidden">
<div class="a" style="left:0;top:0;width:1172px;height:40px;background:#555"></div>
<svg class="a" style="left:7px;top:14px" width="18" height="16"><path d="M0.8 2H14M0.8 6H14M0.8 10H10" stroke="#e8e8e8" stroke-width="1.6"/><path d="M11.8 9.5L16.6 12.4L11.8 15.3Z" fill="#e8e8e8"/></svg>
<div class="a" style="left:32px;top:13px;font-size:14.3px;color:#e8e8e8;white-space:nowrap">Коллизии (количество: 56)</div>
<div class="a" style="left:586px;top:5px;width:42px;height:3px;background:#3a95b5"></div>
<div class="a" style="left:507.2px;top:12px;width:79.6px;height:20px;border-radius:5px;background:#3a95b5;color:#fff;font-weight:bold;font-size:11px;letter-spacing:1px;text-align:center;line-height:20px">коллизии</div>
<div class="a" style="left:591px;top:12px;width:74px;height:20px;border-radius:5px;background:#f5f5f5;color:#111;font-size:9px;letter-spacing:1.2px;text-align:center;line-height:21px;padding-left:1px">В ЗАДАЧЕ</div>
<svg class="a" style="left:1000px;top:8px;overflow:visible" width="170" height="26" fill="none" stroke="#e0e0e0" stroke-width="1.6">
<path d="M-3 0" />
<path d="M-2.5 14.5H-6Q-7.6 14.5 -7.6 12.9V5.6Q-7.6 4 -6 4H1.8Q3.4 4 3.4 5.6V9.2M-2.5 9.2H7.8Q9.4 9.2 9.4 10.8V18.3Q9.4 19.9 7.8 19.9H-0.9Q-2.5 19.9 -2.5 18.3V9.2M3.4 9.2V14.5H-2.5" stroke-width="1.6"/>
<path d="M31.5 5.3H45M31.5 22H45M38.3 8.5V19M35.5 11L38.3 8L41 11M35.5 16.5L38.3 19.5L41 16.5" stroke-width="1.7"/>
<path d="M67 12.3H80.9V16H67Z" fill="#e0e0e0" stroke="none"/>
<path d="M74 4.8V10.5M71.5 8.2L74 10.7L76.5 8.2M74 17.8V23.5M71.5 20.3L74 17.8L76.5 20.3" stroke-width="1.5"/>
<g transform="translate(109.9 13.8)"><path d="M-1.7 -8H1.7L2.2 -5.6L4.1 -4.6L6.4 -5.5L8 -2.6L6.2 -1.3V1.3L8 2.6L6.4 5.5L4.1 4.6L2.2 5.6L1.7 8H-1.7L-2.2 5.6L-4.1 4.6L-6.4 5.5L-8 2.6L-6.2 1.3V-1.3L-8 -2.6L-6.4 -5.5L-4.1 -4.6L-2.2 -5.6Z" fill="#e0e0e0" stroke="none"/><circle r="2.6" fill="#555" stroke="none"/></g>
<path d="M141.5 11.5L146.3 16.2L151 11.5" stroke-width="1.6"/>
</svg>
<div class="a" style="left:64px;top:40px;width:1108px;height:32px;background:#6a6a6a"></div>
<div class="a" style="left:154px;top:40px;width:1px;height:32px;background:#5a5a5a"></div>
<div class="a" style="left:286px;top:40px;width:1px;height:32px;background:#5a5a5a"></div>
<div class="a" style="left:486px;top:40px;width:1px;height:32px;background:#5a5a5a"></div>
<div class="a" style="left:686px;top:40px;width:1px;height:32px;background:#5a5a5a"></div>
<div class="a" style="left:786px;top:40px;width:1px;height:32px;background:#5a5a5a"></div>
<div class="a" style="left:903px;top:40px;width:1px;height:32px;background:#5a5a5a"></div>
<div class="a" style="left:1053px;top:40px;width:1px;height:32px;background:#5a5a5a"></div>
<div class="a" style="left:81px;top:49px;font-size:12px;font-weight:bold;color:#e6e6e6;letter-spacing:-0.3px;white-space:nowrap">Статус</div>
<div class="a" style="left:170.5px;top:49px;font-size:12px;font-weight:bold;color:#e6e6e6;letter-spacing:-0.3px;white-space:nowrap">Раздел</div>
<div class="a" style="left:302.3px;top:49px;font-size:12px;font-weight:bold;color:#e6e6e6;letter-spacing:-0.25px;white-space:nowrap">Элемент (Модель А)</div>
<div class="a" style="left:502.3px;top:49px;font-size:12px;font-weight:bold;color:#e6e6e6;letter-spacing:-0.25px;white-space:nowrap">Элемент (Модель B)</div>
<div class="a" style="left:702.6px;top:49px;font-size:12px;font-weight:bold;color:#e6e6e6;letter-spacing:-0.25px;white-space:nowrap">Задача</div>
<div class="a" style="left:802.5px;top:49px;font-size:12px;font-weight:bold;color:#e6e6e6;letter-spacing:-0.25px;white-space:nowrap">Расстояние</div>
<div class="a" style="left:920px;top:49px;font-size:12px;font-weight:bold;color:#e6e6e6;letter-spacing:-0.25px;white-space:nowrap">Тип</div>
<div class="a" style="left:1069.8px;top:49px;font-size:12px;font-weight:bold;color:#e6e6e6;letter-spacing:-0.25px;white-space:nowrap">Допустимое расстояние</div>
<div class="a" style="left:20.3px;top:46.15px;width:15.5px;height:15.5px;border:2px solid #6e6e6e;border-radius:2.5px;background:transparent"></div>
<div class="a" style="left:0;top:71.5px;width:1172px;height:1px;background:#ddd"></div>
<div class="a" style="left:0;top:103.5px;width:1172px;height:1px;background:#e0e0e0"></div>
<div class="a" style="left:0;top:135.5px;width:1172px;height:1px;background:#e0e0e0"></div>
<div class="a" style="left:20.3px;top:78.15px;width:15.5px;height:15.5px;border:2px solid #6e6e6e;border-radius:2.5px;background:transparent"></div>
<div class="a" style="left:20.3px;top:110.15px;width:15.5px;height:15.5px;border:2px solid #6e6e6e;border-radius:2.5px;background:transparent"></div>
<svg class="a" style="left:80px;top:85.7px" width="10" height="6"><path d="M0 0H9.7L4.85 5.3Z" fill="#777"/></svg>
<svg class="a" style="left:80px;top:118px" width="10" height="6"><path d="M0 5.3H9.7L4.85 0Z" fill="#777"/></svg>
<div class="a" style="left:97px;top:78px;font-size:14px;color:#222;white-space:nowrap">Неотсортированные</div>
<div class="a" style="left:97px;top:110px;font-size:14px;color:#222;white-space:nowrap">группа из 4 коллизий</div>
<div class="a" style="left:0;top:136px;width:1172px;height:32px;background:#efefef;border-bottom:1px solid #dedede"></div>
<div class="a" style="left:20.3px;top:142.15px;width:15.5px;height:15.5px;border:2px solid #6e6e6e;border-radius:2.5px;background:transparent"></div>
<div class="a" style="left:64px;top:136px;width:1.2px;height:32px;background:#3a3a3a"></div>
<div class="a" style="left:154px;top:136px;width:1.2px;height:32px;background:#3a3a3a"></div>
<div class="a" style="left:286px;top:136px;width:1.2px;height:32px;background:#3a3a3a"></div>
<div class="a" style="left:486px;top:136px;width:1.2px;height:32px;background:#3a3a3a"></div>
<div class="a" style="left:686px;top:136px;width:1.2px;height:32px;background:#3a3a3a"></div>
<div class="a" style="left:786px;top:136px;width:1.2px;height:32px;background:#3a3a3a"></div>
<div class="a" style="left:903px;top:136px;width:1.2px;height:32px;background:#3a3a3a"></div>
<div class="a" style="left:1053px;top:136px;width:1.2px;height:32px;background:#3a3a3a"></div>
<div class="a" style="left:81px;top:143px;font-size:14px;color:#222;white-space:nowrap">новая</div>
<div class="a" style="left:170.7px;top:143px;font-size:14px;color:#222;white-space:nowrap">КР - КР</div>
<div class="a" style="left:287px;top:143px;width:199px;overflow:hidden;font-size:14px;color:#222;white-space:nowrap;text-align:right;direction:rtl"><span style="direction:ltr;unicode-bidi:bidi-override;letter-spacing:-0.4px">Строительная_новая_СВС_по_ТУ_</span></div>
<div class="a" style="left:502.2px;top:143px;width:184px;overflow:hidden;font-size:14px;color:#222;white-space:nowrap">Фундаментная плита:ADSK_</div>
<div class="a" style="left:802.5px;top:143px;font-size:14px;color:#222;white-space:nowrap">0.0 мм</div>
<div class="a" style="left:920px;top:143px;font-size:12.6px;color:#555;white-space:nowrap">неопредел...</div>
<div class="a" style="left:920px;top:164px;width:117px;height:1px;background:#555"></div>
<svg class="a" style="left:1020px;top:148.3px" width="11" height="6"><path d="M0 0H10L5 5Z" fill="#666"/></svg>
<div class="a" style="left:1070px;top:142px;font-size:16px;color:#222;white-space:nowrap">0</div>
<div class="a" style="left:1070px;top:164px;width:110px;height:1px;background:#555"></div>
<div class="a" style="left:0;top:168px;width:1172px;height:32px;background:#fff;border-bottom:1px solid #dedede"></div>
<div class="a" style="left:20.3px;top:174.15px;width:15.5px;height:15.5px;border:2px solid #6e6e6e;border-radius:2.5px;background:transparent"></div>
<div class="a" style="left:64px;top:168px;width:1.2px;height:32px;background:#3a3a3a"></div>
<div class="a" style="left:154px;top:168px;width:1.2px;height:32px;background:#3a3a3a"></div>
<div class="a" style="left:286px;top:168px;width:1.2px;height:32px;background:#3a3a3a"></div>
<div class="a" style="left:486px;top:168px;width:1.2px;height:32px;background:#3a3a3a"></div>
<div class="a" style="left:686px;top:168px;width:1.2px;height:32px;background:#3a3a3a"></div>
<div class="a" style="left:786px;top:168px;width:1.2px;height:32px;background:#3a3a3a"></div>
<div class="a" style="left:903px;top:168px;width:1.2px;height:32px;background:#3a3a3a"></div>
<div class="a" style="left:1053px;top:168px;width:1.2px;height:32px;background:#3a3a3a"></div>
<div class="a" style="left:81px;top:175px;font-size:14px;color:#222;white-space:nowrap">новая</div>
<div class="a" style="left:170.7px;top:175px;font-size:14px;color:#222;white-space:nowrap">КР - КР</div>
<div class="a" style="left:287px;top:175px;width:199px;overflow:hidden;font-size:14px;color:#222;white-space:nowrap;text-align:right;direction:rtl"><span style="direction:ltr;unicode-bidi:bidi-override;letter-spacing:-0.4px">Строительная_новая_СВС_по_ТУ_</span></div>
<div class="a" style="left:502.2px;top:175px;width:184px;overflow:hidden;font-size:14px;color:#222;white-space:nowrap">Фундаментная плита:ADSK_</div>
<div class="a" style="left:802.5px;top:175px;font-size:14px;color:#222;white-space:nowrap">0.0 мм</div>
<div class="a" style="left:920px;top:175px;font-size:12.6px;color:#555;white-space:nowrap">неопредел...</div>
<div class="a" style="left:920px;top:196px;width:117px;height:1px;background:#555"></div>
<svg class="a" style="left:1020px;top:180.3px" width="11" height="6"><path d="M0 0H10L5 5Z" fill="#666"/></svg>
<div class="a" style="left:1070px;top:174px;font-size:16px;color:#222;white-space:nowrap">0</div>
<div class="a" style="left:1070px;top:196px;width:110px;height:1px;background:#555"></div>
<div class="a" style="left:0;top:200px;width:1172px;height:32px;background:#efefef;border-bottom:1px solid #dedede"></div>
<div class="a" style="left:20.3px;top:206.15px;width:15.5px;height:15.5px;border:2px solid #6e6e6e;border-radius:2.5px;background:transparent"></div>
<div class="a" style="left:64px;top:200px;width:1.2px;height:32px;background:#3a3a3a"></div>
<div class="a" style="left:154px;top:200px;width:1.2px;height:32px;background:#3a3a3a"></div>
<div class="a" style="left:286px;top:200px;width:1.2px;height:32px;background:#3a3a3a"></div>
<div class="a" style="left:486px;top:200px;width:1.2px;height:32px;background:#3a3a3a"></div>
<div class="a" style="left:686px;top:200px;width:1.2px;height:32px;background:#3a3a3a"></div>
<div class="a" style="left:786px;top:200px;width:1.2px;height:32px;background:#3a3a3a"></div>
<div class="a" style="left:903px;top:200px;width:1.2px;height:32px;background:#3a3a3a"></div>
<div class="a" style="left:1053px;top:200px;width:1.2px;height:32px;background:#3a3a3a"></div>
<div class="a" style="left:81px;top:207px;font-size:14px;color:#222;white-space:nowrap">новая</div>
<div class="a" style="left:170.7px;top:207px;font-size:14px;color:#222;white-space:nowrap">КР - КР</div>
<div class="a" style="left:287px;top:207px;width:199px;overflow:hidden;font-size:14px;color:#222;white-space:nowrap;text-align:right;direction:rtl"><span style="direction:ltr;unicode-bidi:bidi-override;letter-spacing:-0.4px">Строительная_новая_СВС_по_ТУ_</span></div>
<div class="a" style="left:502.2px;top:207px;width:184px;overflow:hidden;font-size:14px;color:#222;white-space:nowrap">Фундаментная плита:ADSK_</div>
<div class="a" style="left:802.5px;top:207px;font-size:14px;color:#222;white-space:nowrap">0.0 мм</div>
<div class="a" style="left:920px;top:207px;font-size:12.6px;color:#555;white-space:nowrap">неопредел...</div>
<div class="a" style="left:920px;top:228px;width:117px;height:1px;background:#555"></div>
<svg class="a" style="left:1020px;top:212.3px" width="11" height="6"><path d="M0 0H10L5 5Z" fill="#666"/></svg>
<div class="a" style="left:1070px;top:206px;font-size:16px;color:#222;white-space:nowrap">0</div>
<div class="a" style="left:1070px;top:228px;width:110px;height:1px;background:#555"></div>
<div class="a" style="left:0;top:232px;width:1172px;height:32px;background:#fff;border-bottom:1px solid #dedede"></div>
<div class="a" style="left:20.3px;top:238.15px;width:15.5px;height:15.5px;border:2px solid #6e6e6e;border-radius:2.5px;background:transparent"></div>
<div class="a" style="left:64px;top:232px;width:1.2px;height:32px;background:#3a3a3a"></div>
<div class="a" style="left:154px;top:232px;width:1.2px;height:32px;background:#3a3a3a"></div>
<div class="a" style="left:286px;top:232px;width:1.2px;height:32px;background:#3a3a3a"></div>
<div class="a" style="left:486px;top:232px;width:1.2px;height:32px;background:#3a3a3a"></div>
<div class="a" style="left:686px;top:232px;width:1.2px;height:32px;background:#3a3a3a"></div>
<div class="a" style="left:786px;top:232px;width:1.2px;height:32px;background:#3a3a3a"></div>
<div class="a" style="left:903px;top:232px;width:1.2px;height:32px;background:#3a3a3a"></div>
<div class="a" style="left:1053px;top:232px;width:1.2px;height:32px;background:#3a3a3a"></div>
<div class="a" style="left:81px;top:239px;font-size:14px;color:#222;white-space:nowrap">новая</div>
<div class="a" style="left:170.7px;top:239px;font-size:14px;color:#222;white-space:nowrap">КР - КР</div>
<div class="a" style="left:287px;top:239px;width:199px;overflow:hidden;font-size:14px;color:#222;white-space:nowrap;text-align:right;direction:rtl"><span style="direction:ltr;unicode-bidi:bidi-override;letter-spacing:-0.4px">Строительная_новая_СВС_по_ТУ_</span></div>
<div class="a" style="left:502.2px;top:239px;width:184px;overflow:hidden;font-size:14px;color:#222;white-space:nowrap">Фундаментная плита:ADSK_</div>
<div class="a" style="left:802.5px;top:239px;font-size:14px;color:#222;white-space:nowrap">0.0 мм</div>
<div class="a" style="left:920px;top:239px;font-size:12.6px;color:#555;white-space:nowrap">неопредел...</div>
<div class="a" style="left:920px;top:260px;width:117px;height:1px;background:#555"></div>
<svg class="a" style="left:1020px;top:244.3px" width="11" height="6"><path d="M0 0H10L5 5Z" fill="#666"/></svg>
<div class="a" style="left:1070px;top:238px;font-size:16px;color:#222;white-space:nowrap">0</div>
<div class="a" style="left:1070px;top:260px;width:110px;height:1px;background:#555"></div>
<div class="a" style="left:0;top:264px;width:1172px;height:32px;background:#efefef;border-bottom:1px solid #dedede"></div>
<div class="a" style="left:20.3px;top:270.15px;width:15.5px;height:15.5px;border:2px solid #6e6e6e;border-radius:2.5px;background:transparent"></div>
<div class="a" style="left:64px;top:264px;width:1.2px;height:32px;background:#3a3a3a"></div>
<div class="a" style="left:154px;top:264px;width:1.2px;height:32px;background:#3a3a3a"></div>
<div class="a" style="left:286px;top:264px;width:1.2px;height:32px;background:#3a3a3a"></div>
<div class="a" style="left:486px;top:264px;width:1.2px;height:32px;background:#3a3a3a"></div>
<div class="a" style="left:686px;top:264px;width:1.2px;height:32px;background:#3a3a3a"></div>
<div class="a" style="left:786px;top:264px;width:1.2px;height:32px;background:#3a3a3a"></div>
<div class="a" style="left:903px;top:264px;width:1.2px;height:32px;background:#3a3a3a"></div>
<div class="a" style="left:1053px;top:264px;width:1.2px;height:32px;background:#3a3a3a"></div>
<div class="a" style="left:81px;top:271px;font-size:14px;color:#222;white-space:nowrap">новая</div>
<div class="a" style="left:170.7px;top:271px;font-size:14px;color:#222;white-space:nowrap">КР - КР</div>
<div class="a" style="left:287px;top:271px;width:199px;overflow:hidden;font-size:14px;color:#222;white-space:nowrap;text-align:right;direction:rtl"><span style="direction:ltr;unicode-bidi:bidi-override;letter-spacing:-0.4px">Строительная_новая_СВС_по_ТУ_</span></div>
<div class="a" style="left:502.2px;top:271px;width:184px;overflow:hidden;font-size:14px;color:#222;white-space:nowrap">Перекрытие:ADSK_земля:10</div>
<div class="a" style="left:802.5px;top:271px;font-size:14px;color:#222;white-space:nowrap">0.0 мм</div>
<div class="a" style="left:920px;top:271px;font-size:12.6px;color:#555;white-space:nowrap">неопредел...</div>
<div class="a" style="left:920px;top:292px;width:117px;height:1px;background:#555"></div>
<svg class="a" style="left:1020px;top:276.3px" width="11" height="6"><path d="M0 0H10L5 5Z" fill="#666"/></svg>
<div class="a" style="left:1070px;top:270px;font-size:16px;color:#222;white-space:nowrap">0</div>
<div class="a" style="left:1070px;top:292px;width:110px;height:1px;background:#555"></div>
<div class="a" style="left:0;top:381.5px;width:1172px;height:8.5px;background:#efefef"></div>
<div class="a" style="left:0;top:381.5px;width:591px;height:8.5px;background:#c6c6c6"></div>
</div>
<div class="a" style="left:785px;top:565.5px;width:148px;height:255.5px;background:#555;box-shadow:0 2px 8px rgba(0,0,0,0.45)"></div>
<div class="a" style="left:793px;top:573px;width:132px;height:240px;background:#f0f0f0;border-radius:6px"></div>
<div class="a" style="left:809px;top:589px;font-size:12.4px;color:#555;white-space:nowrap">Допустить группу</div>
<div class="a" style="left:809px;top:637px;font-size:12.4px;color:#555;white-space:nowrap">Перейти к виду</div>
<div class="a" style="left:809px;top:685px;font-size:12.4px;color:#555;white-space:nowrap">Сохранить вид</div>
<div class="a" style="left:809px;top:733px;font-size:12.4px;color:#555;white-space:nowrap">Редактировать</div>
<div class="a" style="left:809px;top:781px;font-size:12.4px;color:#555;white-space:nowrap">Удалить</div>
<svg class="a" style="left:0;top:0" width="1745" height="839" style="pointer-events:none">
<defs><filter id="sh" x="-50%" y="-50%" width="200%" height="200%"><feGaussianBlur in="SourceAlpha" stdDeviation="2"/><feOffset dx="2" dy="2"/><feComponentTransfer><feFuncA type="linear" slope="0.5"/></feComponentTransfer><feMerge><feMergeNode/><feMergeNode in="SourceGraphic"/></feMerge></filter></defs>
<g filter="url(#sh)"><path d="M701.5 660L729.5 586" stroke="#c8000f" stroke-width="2.6"/><path d="M736.6 574.9L724.2 585.1L738 591.3Z" fill="#c8000f"/></g>
</svg>
</body></html>
